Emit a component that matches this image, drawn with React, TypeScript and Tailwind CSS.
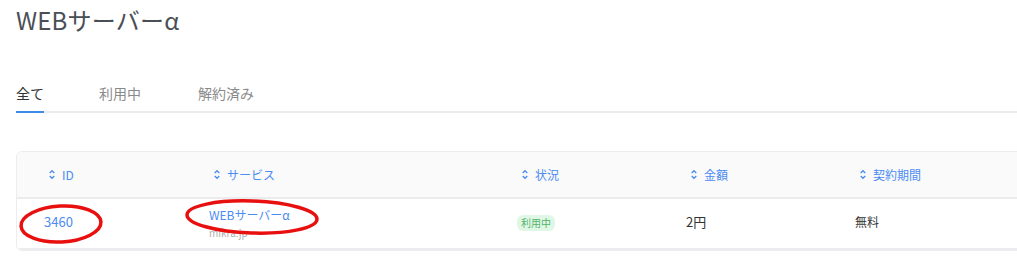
const font = { fontFamily: '"Noto Sans CJK JP", "Noto Sans", sans-serif' }

const headers = [
  { label: "ID", w: "w-[165px]" },
  { label: "サービス", w: "w-[308px]" },
  { label: "状況", w: "w-[169px]" },
  { label: "金額", w: "w-[169px]" },
  { label: "契約期間", w: "flex-1" },
]

function SortIcon() {
  return (
    <svg width="8" height="11" viewBox="0 0 8 11" className="mr-[6px]" fill="none" stroke="#4b8bf4" strokeWidth="1.3">
      <path d="M1.7 4 L4 1.7 L6.3 4" />
      <path d="M1.7 7 L4 9.3 L6.3 7" />
    </svg>
  )
}

export default function App() {
  return (
    <div className="w-[1017px] h-[276px] bg-white overflow-hidden relative" style={font}>
      <div className="pl-4">
        <h1 className="pt-[2px] text-[24px] leading-[36px] tracking-[0.2px] text-[#4a4f56]">WEBサーバーα</h1>

        {/* Tabs */}
        <div className="mt-[45px] flex text-[14px] leading-[20px]">
          <div className="pb-[8px] border-b-2 border-[#3b8be8] text-[#333]">全て</div>
          <div className="flex-1 flex border-b-2 border-[#ececec] pl-[55px] gap-[57px] text-[#8a8a8a]">
            <span>利用中</span>
            <span>解約済み</span>
          </div>
        </div>

        {/* Table */}
        <div className="mt-[38px] mr-[-12px] border border-[#ededf0] rounded-l-[6px] overflow-hidden">
          <div className="flex h-[47px] items-center bg-[#fafafa] border-b-2 border-[#ececef] text-[12px] text-[#4b8bf4] pl-[31px]">
            {headers.map((h) => (
              <div key={h.label} className={`${h.w} flex items-center`}>
                <SortIcon />
                <span>{h.label}</span>
              </div>
            ))}
          </div>
          <div className="flex h-[51px] items-center text-[12px] pl-[27px] pb-[3px] border-b-2 border-[#ececef]">
            <div className="w-[165px] text-[#4b8bf4] text-[13px]">3460</div>
            <div className="w-[308px] flex flex-col leading-[16px] pt-[3px]">
              <span className="text-[#4b8bf4] text-[12px]">WEBサーバーα</span>
              <span className="text-[#b0b0b0] text-[10px] mt-[2px]">mikra.jp</span>
            </div>
            <div className="w-[169px]">
              <span className="inline-block bg-[#e1f7e6] text-[#52b36a] text-[10px] leading-[16px] rounded-[6px] px-[4px]">利用中</span>
            </div>
            <div className="w-[169px] text-[#333] text-[13px]">2円</div>
            <div className="flex-1 text-[#333]">無料</div>
          </div>
        </div>
      </div>

      {/* red annotation circles */}
      <svg className="absolute inset-0 pointer-events-none" width="1017" height="276">
        <ellipse cx="61" cy="224" rx="40" ry="18" fill="none" stroke="#e8100f" strokeWidth="3.5" transform="rotate(-3 61 224)" />
        <ellipse cx="252" cy="217" rx="65" ry="16" fill="none" stroke="#e8100f" strokeWidth="3.5" transform="rotate(2 252 217)" />
      </svg>
    </div>
  )
}
